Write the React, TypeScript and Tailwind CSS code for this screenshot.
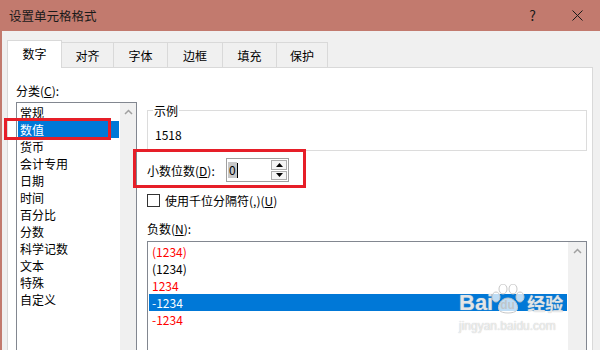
import React from "react";

const FONT = '"Microsoft YaHei", "Noto Sans CJK SC", "Noto Sans", sans-serif';

const categories = ["常规", "数值", "货币", "会计专用", "日期", "时间", "百分比", "分数", "科学记数", "文本", "特殊", "自定义"];

const negatives = [
  { text: "(1234)", color: "text-[#ff0000]" },
  { text: "(1234)", color: "text-black" },
  { text: "1234", color: "text-[#ff0000]" },
  { text: "-1234", color: "text-white", selected: true },
  { text: "-1234", color: "text-[#ff0000]" },
];

const tabs = [
  { label: "数字", w: "w-[55px]" },
  { label: "对齐", w: "w-[52px]" },
  { label: "字体", w: "w-[54px]" },
  { label: "边框", w: "w-[55px]" },
  { label: "填充", w: "w-[54px]" },
  { label: "保护", w: "w-[51px]" },
];

// Thin chevron used at the top of the list scrollbars
function UpChevron() {
  return (
    <svg width="9" height="6" viewBox="0 0 9 6" className="mt-[6px]">
      <path d="M1 5 L4.5 1.5 L8 5" fill="none" stroke="#a0a0a0" strokeWidth="1.5" />
    </svg>
  );
}

function Paw() {
  return (
    <svg width="34" height="30" viewBox="0 0 34 30">
      <g fill="#ffffff" fillOpacity="0.75" stroke="#c8c8c8" strokeWidth="1">
        <ellipse cx="5" cy="13" rx="4" ry="5" />
        <ellipse cx="12" cy="5" rx="4" ry="5" />
        <ellipse cx="22" cy="5" rx="4" ry="5" />
        <ellipse cx="29" cy="13" rx="4" ry="5" />
        <path d="M17 14 C 10 14, 6 22, 8 26 C 10 30, 24 30, 26 26 C 28 22, 24 14, 17 14 Z" />
      </g>
    </svg>
  );
}

export default function App() {
  return (
    <div
      className="relative w-[600px] h-[350px] overflow-hidden bg-[#f0f0f0] text-[12px] leading-[17px] text-black"
      style={{ fontFamily: FONT }}
    >
      {/* TITLE BAR */}
      <div className="h-[31px] bg-[#c27a6e] flex items-center pl-[9px] pr-[17px]">
        <span className="text-[12.5px] text-[#1a1a1a]">设置单元格格式</span>
        <span className="ml-auto mr-[36px] text-[14px] text-[#1a1a1a]">?</span>
        <svg width="11" height="11" viewBox="0 0 11 11">
          <path d="M0.5 0.5 L10.5 10.5 M10.5 0.5 L0.5 10.5" stroke="#1a1a1a" strokeWidth="1" />
        </svg>
      </div>

      {/* BODY */}
      <div className="h-[319px] border-l-[2px] border-[#c27a6e] pl-[5px] pr-[7px] pt-[9px] flex flex-col">
        {/* TABS */}
        <div className="flex items-end h-[27px]">
          {tabs.map((t, i) =>
            i === 0 ? (
              <div
                key={t.label}
                className={`${t.w} h-[28px] -mb-px z-10 bg-white border border-b-0 border-[#d9d9d9] flex items-center justify-center pb-[2px]`}
              >
                {t.label}
              </div>
            ) : (
              <div
                key={t.label}
                className={`${t.w} h-[25px] bg-[#f0f0f0] border border-l-0 border-b-0 border-[#d9d9d9] flex items-center justify-center`}
              >
                {t.label}
              </div>
            )
          )}
        </div>

        {/* PANEL */}
        <div className="flex-1 bg-white border border-b-0 border-[#d9d9d9] flex pl-[8px] pt-[14px] gap-[10px]">
          {/* LEFT: category list */}
          <div className="w-[121px] flex flex-col">
            <div className="h-[17px]">
              分类(<span className="underline">C</span>):
            </div>
            <div className="mt-[3px] flex-1 border border-[#828790] border-b-0 flex">
              <div className="flex-1 p-px flex flex-col">
                {categories.map((c, i) => (
                  <div
                    key={c}
                    className={`h-[17px] pl-[2px] ${i === 1 ? "bg-[#0078d7] text-white" : ""}`}
                  >
                    {c}
                  </div>
                ))}
              </div>
              <div className="w-[16px] bg-[#f0f0f0] flex justify-center">
                <UpChevron />
              </div>
            </div>
          </div>

          {/* RIGHT */}
          <div className="w-[440px] flex flex-col">
            {/* 示例 group */}
            <div className="relative mt-[28px] h-[41px] border border-[#dcdcdc] pl-[7px] pt-[15px]">
              <span className="absolute -top-[9px] left-[5px] bg-white px-px">示例</span>
              1518
            </div>

            {/* decimal places */}
            <div className="mt-[7px] h-[24px] flex items-center">
              <span className="w-[79px]">
                小数位数(<span className="underline">D</span>):
              </span>
              <div className="w-[63px] h-[24px] border border-[#a0a0a0] flex items-center pl-[1px] pr-px">
                <span className="bg-[#c8c8c8] leading-[16px] px-px">0</span>
                <span className="w-px h-[15px] bg-black" />
                <div className="ml-auto w-[16px] h-[20px] flex flex-col gap-px">
                  <div className="flex-1 border border-[#adadad] bg-[#f5f5f5] flex items-center justify-center">
                    <svg width="7" height="4" viewBox="0 0 7 4">
                      <path d="M0 4 L3.5 0 L7 4 Z" fill="#000" />
                    </svg>
                  </div>
                  <div className="flex-1 border border-[#adadad] bg-[#f5f5f5] flex items-center justify-center">
                    <svg width="7" height="4" viewBox="0 0 7 4">
                      <path d="M0 0 L3.5 4 L7 0 Z" fill="#000" />
                    </svg>
                  </div>
                </div>
              </div>
            </div>

            {/* thousands separator */}
            <div className="mt-[11px] h-[14px] flex items-center gap-[5px]">
              <span className="w-[13px] h-[13px] border border-[#333] bg-white" />
              <span>
                使用千位分隔符(,)(<span className="underline">U</span>)
              </span>
            </div>

            {/* negative numbers */}
            <div className="mt-[13px] h-[17px]">
              负数(<span className="underline">N</span>):
            </div>
            <div className="mt-[4px] flex-1 border border-[#828790] border-b-0 flex">
              <div className="flex-1 p-px flex flex-col">
                {negatives.map((n, i) => (
                  <div
                    key={i}
                    className={`h-[17px] pl-[3px] ${n.color} ${n.selected ? "bg-[#0078d7]" : ""}`}
                  >
                    {n.text}
                  </div>
                ))}
              </div>
              <div className="w-[18px] bg-[#f0f0f0] flex justify-center">
                <UpChevron />
              </div>
            </div>
          </div>
        </div>
      </div>

      {/* RED ANNOTATION BOXES */}
      <div className="absolute left-[4px] top-[118px] w-[107px] h-[22px] border-[3px] border-[#e61e28]" />
      <div className="absolute left-[133px] top-[149px] w-[173px] h-[39px] border-[3px] border-[#e61e28]" />

      {/* WATERMARK */}
      <div className="absolute left-[459px] top-[284px] flex flex-col items-start pointer-events-none">
        <div className="flex items-end h-[30px]">
          <span
            className="text-[22px] font-bold leading-[22px] text-white/70 [text-shadow:0_0_1px_#b0b0b0]"
            style={{ fontFamily: '"Liberation Sans", Arial, sans-serif' }}
          >
            Bai
          </span>
          <div className="relative w-[34px] h-[30px] -ml-[2px]">
            <Paw />
            <span
              className="absolute left-[9px] top-[14px] text-[12px] leading-[14px] font-bold text-[#c0c0c0]/80"
              style={{ fontFamily: '"Liberation Sans", Arial, sans-serif' }}
            >
              du
            </span>
          </div>
          <span className="text-[18px] leading-[22px] font-bold text-white/70 [text-shadow:0_0_1px_#b0b0b0] ml-[2px]">
            经验
          </span>
        </div>
        <span
          className="text-[12px] leading-[16px] mt-[4px] text-white/70 [text-shadow:0_0_1px_#b0b0b0]"
          style={{ fontFamily: '"Liberation Sans", Arial, sans-serif' }}
        >
          jingyan.baidu.com
        </span>
      </div>
    </div>
  );
}
